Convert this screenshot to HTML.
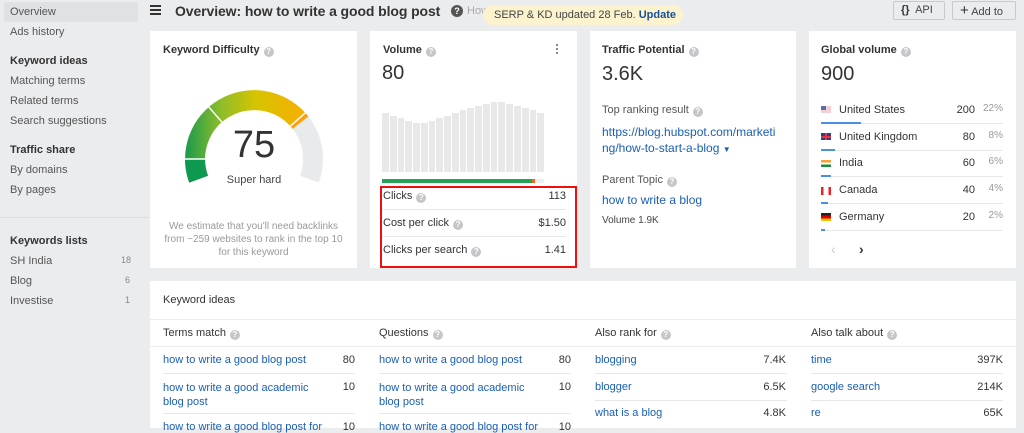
<!DOCTYPE html>
<html><head><meta charset="utf-8"><style>
*{margin:0;padding:0;box-sizing:border-box}
body{width:1024px;height:428px;overflow:hidden;background:#ebecee;font-family:"Liberation Sans",Arial,sans-serif;color:#333;position:relative;font-size:12px}
.a{position:absolute;white-space:nowrap}
.side{font-size:11px;color:#555}
.sh{font-weight:bold;color:#333;font-size:11px}
.card{position:absolute;background:#fff}
.q{display:inline-block;width:10px;height:10px;border-radius:50%;background:#c4c6c9;color:#fff;font-size:8px;line-height:10px;text-align:center;font-weight:bold;vertical-align:-1px;margin-left:4px}
.t{font-weight:bold;font-size:11px;color:#333}
.lnk{color:#1a5fb4}
.row{font-size:11px;color:#333}
.gl{position:absolute;height:1px;background:#e6e7e9}
</style></head><body>
<!-- sidebar -->
<div class="a" style="left:4px;top:2px;width:134px;height:20px;background:#dfe1e5;border-radius:2px"></div>
<div class="a side" style="left:10px;top:6px">Overview</div>
<div class="a side" style="left:10px;top:26px">Ads history</div>
<div class="a sh" style="left:10px;top:55px">Keyword ideas</div>
<div class="a side" style="left:10px;top:75px">Matching terms</div>
<div class="a side" style="left:10px;top:95px">Related terms</div>
<div class="a side" style="left:10px;top:115px">Search suggestions</div>
<div class="a sh" style="left:10px;top:144px">Traffic share</div>
<div class="a side" style="left:10px;top:164px">By domains</div>
<div class="a side" style="left:10px;top:184px">By pages</div>
<div class="a" style="left:0;top:217px;width:150px;height:1px;background:#dcdde0"></div>
<div class="a sh" style="left:10px;top:235px">Keywords lists</div>
<div class="a side" style="left:10px;top:255px">SH India</div><div class="a side" style="left:121px;top:255px;font-size:9px;color:#888">18</div>
<div class="a side" style="left:10px;top:275px">Blog</div><div class="a side" style="left:125px;top:275px;font-size:9px;color:#888">6</div>
<div class="a side" style="left:10px;top:295px">Investise</div><div class="a side" style="left:125px;top:295px;font-size:9px;color:#888">1</div>

<!-- header -->
<div class="a" style="left:150px;top:5px;width:11px;height:2px;background:#333;box-shadow:0 4px 0 #333,0 8px 0 #333"></div>
<div class="a" style="left:175px;top:3px;font-size:14px;font-weight:bold;color:#333;letter-spacing:-0.1px">Overview: how to write a good blog post</div>
<div class="a" style="left:451px;top:5px;width:12px;height:12px;border-radius:50%;background:#555;color:#fff;font-size:9px;font-weight:bold;text-align:center;line-height:12px">?</div>
<div class="a" style="left:467px;top:5px;font-size:11px;color:#aaa">How</div>
<div class="a" style="left:483px;top:5px;width:200px;height:20px;background:#fbf3cd;border-radius:10px;font-size:11px;color:#444;line-height:20px;padding-left:11px">SERP &amp; KD updated 28 Feb. <b style="color:#1a4f9c">Update</b></div>
<div class="a" style="left:893px;top:1px;width:52px;height:19px;border:1px solid #c8c9cc;border-radius:2px;font-size:11px;line-height:17px;color:#444;padding-left:7px"><b style="color:#333">{}</b>&nbsp; API</div>
<div class="a" style="left:952px;top:1px;width:64px;height:19px;border:1px solid #c8c9cc;border-radius:2px;font-size:11px;line-height:17px;color:#444;padding-left:7px"><span style="font-size:15px;color:#333">+</span> Add to</div>

<!-- KD card -->
<div class="card" style="left:150px;top:31px;width:207px;height:237px"></div>
<div class="a t" style="left:163px;top:44px">Keyword Difficulty<span class="q">?</span></div>
<svg class="a" style="left:0;top:0" width="400" height="270">
<defs><linearGradient id="g" gradientUnits="userSpaceOnUse" x1="185" y1="0" x2="305" y2="0">
<stop offset="0" stop-color="#199a4d"/><stop offset="0.3" stop-color="#8ebd2a"/><stop offset="0.6" stop-color="#d7c400"/><stop offset="1" stop-color="#f7ae00"/></linearGradient></defs>
<path d="M198.6 179.2 A59 59 0 0 1 297.8 119.5" stroke="url(#g)" stroke-width="20" fill="none"/>
<path d="M198.6 179.2 A59 59 0 0 1 195 159" stroke="#0d9950" stroke-width="20" fill="none"/>
<path d="M297.8 119.5 A59 59 0 0 1 300.5 122.7" stroke="#ff9e0a" stroke-width="20" fill="none"/>
<path d="M300.5 122.7 A59 59 0 0 1 309.4 179.2" stroke="#e9eaec" stroke-width="20" fill="none"/>
<g stroke="#fff" stroke-width="1.5">
<line x1="183" y1="159" x2="207" y2="159"/>
<line x1="208.7" y1="106.9" x2="221.9" y2="122"/>
<line x1="305.3" y1="112.8" x2="290.4" y2="126.2"/>
</g>
</svg>
<div class="a" style="left:224px;top:124px;width:60px;text-align:center;font-size:38px;color:#333">75</div>
<div class="a" style="left:214px;top:174px;width:80px;text-align:center;font-size:11px;color:#444">Super hard</div>
<div class="a" style="left:150px;top:220px;width:207px;text-align:center;font-size:10px;line-height:13px;color:#999;white-space:normal">We estimate that you'll need backlinks<br>from ~259 websites to rank in the top 10<br>for this keyword</div>

<!-- Volume card -->
<div class="card" style="left:370px;top:31px;width:207px;height:237px"></div>
<div class="a t" style="left:383px;top:44px">Volume<span class="q">?</span></div>
<div class="a" style="left:556px;top:44px;width:2px;height:2px;background:#888;box-shadow:0 4px 0 #888,0 8px 0 #888"></div>
<div class="a" style="left:382px;top:62px;font-size:20px;color:#333">80</div>
<div class="a" style="left:382px;top:100px;width:162px;height:72px;display:flex;align-items:flex-end;gap:1px">
<div style="flex:1;height:59px;background:#e8e8e8"></div><div style="flex:1;height:56px;background:#e8e8e8"></div><div style="flex:1;height:54px;background:#e8e8e8"></div><div style="flex:1;height:51px;background:#e8e8e8"></div><div style="flex:1;height:49px;background:#e8e8e8"></div><div style="flex:1;height:49px;background:#e8e8e8"></div><div style="flex:1;height:51px;background:#e8e8e8"></div><div style="flex:1;height:54px;background:#e8e8e8"></div><div style="flex:1;height:56px;background:#e8e8e8"></div><div style="flex:1;height:59px;background:#e8e8e8"></div><div style="flex:1;height:62px;background:#e8e8e8"></div><div style="flex:1;height:64px;background:#e8e8e8"></div><div style="flex:1;height:66px;background:#e8e8e8"></div><div style="flex:1;height:68px;background:#e8e8e8"></div><div style="flex:1;height:70px;background:#e8e8e8"></div><div style="flex:1;height:70px;background:#e8e8e8"></div><div style="flex:1;height:68px;background:#e8e8e8"></div><div style="flex:1;height:66px;background:#e8e8e8"></div><div style="flex:1;height:64px;background:#e8e8e8"></div><div style="flex:1;height:62px;background:#e8e8e8"></div><div style="flex:1;height:59px;background:#e8e8e8"></div>
</div>
<div class="a" style="left:382px;top:179px;width:162px;height:4px;background:#eee"></div>
<div class="a" style="left:382px;top:179px;width:150px;height:4px;background:#23a455"></div>
<div class="a" style="left:532px;top:179px;width:3px;height:4px;background:#f26a1b"></div>
<div class="a row" style="left:383px;top:190px">Clicks<span class="q">?</span></div><div class="a row" style="right:458px;top:190px">113</div>
<div class="gl" style="left:382px;top:209px;width:184px"></div>
<div class="a row" style="left:383px;top:217px">Cost per click<span class="q">?</span></div><div class="a row" style="right:458px;top:217px">$1.50</div>
<div class="gl" style="left:382px;top:236px;width:184px"></div>
<div class="a row" style="left:383px;top:244px">Clicks per search<span class="q">?</span></div><div class="a row" style="right:458px;top:244px">1.41</div>
<div class="a" style="left:380px;top:186px;width:197px;height:82px;border:2px solid #ee1010"></div>

<!-- Traffic potential -->
<div class="card" style="left:590px;top:31px;width:206px;height:237px"></div>
<div class="a t" style="left:602px;top:44px">Traffic Potential<span class="q">?</span></div>
<div class="a" style="left:602px;top:63px;font-size:20px;color:#333">3.6K</div>
<div class="a" style="left:602px;top:104px;font-size:11px;color:#555">Top ranking result<span class="q">?</span></div>
<div class="a lnk" style="left:602px;top:124px;font-size:12px;line-height:16px">https://blog.hubspot.com/marketi<br>ng/how-to-start-a-blog <span style="font-size:8px">▼</span></div>
<div class="a" style="left:602px;top:174px;font-size:11px;color:#555">Parent Topic<span class="q">?</span></div>
<div class="a lnk" style="left:602px;top:193px;font-size:12px">how to write a blog</div>
<div class="a" style="left:602px;top:215px;font-size:10px;color:#444">Volume 1.9K</div>

<!-- Global volume -->
<div class="card" style="left:809px;top:31px;width:207px;height:237px"></div>
<div class="a t" style="left:821px;top:44px">Global volume<span class="q">?</span></div>
<div class="a" style="left:821px;top:63px;font-size:20px;color:#333">900</div>
<div class="a" style="left:821px;top:106px;width:10px;height:7px;background:#f3d0d3"><div style="width:5px;height:4px;background:#5a6ea8"></div></div>
<div class="a row" style="left:839px;top:104px">United States</div><div class="a row" style="right:49px;top:104px">200</div><div class="a row" style="right:21px;top:103px;color:#999;font-size:10px">22%</div>
<div class="gl" style="left:821px;top:123px;width:182px"></div><div class="a" style="left:821px;top:122px;width:40px;height:2px;background:#4a90e2"></div>
<div class="a" style="left:821px;top:133px;width:10px;height:7px;background:#2b3f8c"><div style="position:absolute;left:4px;top:0;width:2px;height:7px;background:#e33"></div><div style="position:absolute;left:0;top:3px;width:10px;height:2px;background:#e33"></div></div>
<div class="a row" style="left:839px;top:131px">United Kingdom</div><div class="a row" style="right:49px;top:131px">80</div><div class="a row" style="right:21px;top:130px;color:#999;font-size:10px">8%</div>
<div class="gl" style="left:821px;top:150px;width:182px"></div><div class="a" style="left:821px;top:149px;width:14px;height:2px;background:#4a90e2"></div>
<div class="a" style="left:821px;top:160px;width:10px;height:7px;background:linear-gradient(#f7a13a 33%,#fff 33%,#fff 66%,#1e8a3a 66%)"></div>
<div class="a row" style="left:839px;top:157px">India</div><div class="a row" style="right:49px;top:157px">60</div><div class="a row" style="right:21px;top:156px;color:#999;font-size:10px">6%</div>
<div class="gl" style="left:821px;top:176px;width:182px"></div><div class="a" style="left:821px;top:175px;width:10px;height:2px;background:#4a90e2"></div>
<div class="a" style="left:821px;top:187px;width:10px;height:8px;background:linear-gradient(90deg,#e22 25%,#fff 25%,#fff 75%,#e22 75%)"></div>
<div class="a row" style="left:839px;top:184px">Canada</div><div class="a row" style="right:49px;top:184px">40</div><div class="a row" style="right:21px;top:183px;color:#999;font-size:10px">4%</div>
<div class="gl" style="left:821px;top:203px;width:182px"></div><div class="a" style="left:821px;top:202px;width:7px;height:2px;background:#4a90e2"></div>
<div class="a" style="left:821px;top:213px;width:10px;height:8px;background:linear-gradient(#222 33%,#d00 33%,#d00 66%,#f5c400 66%)"></div>
<div class="a row" style="left:839px;top:211px">Germany</div><div class="a row" style="right:49px;top:211px">20</div><div class="a row" style="right:21px;top:210px;color:#999;font-size:10px">2%</div>
<div class="gl" style="left:821px;top:230px;width:182px"></div><div class="a" style="left:821px;top:229px;width:4px;height:2px;background:#4a90e2"></div>
<div class="a" style="left:831px;top:241px;font-size:14px;color:#ccc">‹</div>
<div class="a" style="left:859px;top:241px;font-size:14px;color:#333;font-weight:bold">›</div>

<!-- Keyword ideas -->
<div class="card" style="left:150px;top:281px;width:866px;height:147px"></div>
<div class="a" style="left:163px;top:294px;font-size:11px;color:#333">Keyword ideas</div>
<div class="gl" style="left:150px;top:319px;width:866px;background:#ececee"></div>
<div class="a t" style="left:163px;top:327px;font-weight:normal;color:#333">Terms match<span class="q">?</span></div>
<div class="a t" style="left:379px;top:327px;font-weight:normal">Questions<span class="q">?</span></div>
<div class="a t" style="left:595px;top:327px;font-weight:normal">Also rank for<span class="q">?</span></div>
<div class="a t" style="left:811px;top:327px;font-weight:normal">Also talk about<span class="q">?</span></div>
<div class="gl" style="left:150px;top:346px;width:866px;background:#ececee"></div>

<div class="a lnk" style="left:163px;top:354px;font-size:11px">how to write a good blog post</div><div class="a row" style="right:669px;top:354px">80</div>
<div class="gl" style="left:163px;top:373px;width:192px"></div>
<div class="a lnk" style="left:163px;top:381px;font-size:11px;line-height:14px">how to write a good academic<br>blog post</div><div class="a row" style="right:669px;top:381px">10</div>
<div class="gl" style="left:163px;top:413px;width:192px"></div>
<div class="a lnk" style="left:163px;top:421px;font-size:11px">how to write a good blog post for</div><div class="a row" style="right:669px;top:421px">10</div>

<div class="a lnk" style="left:379px;top:354px;font-size:11px">how to write a good blog post</div><div class="a row" style="right:453px;top:354px">80</div>
<div class="gl" style="left:379px;top:373px;width:192px"></div>
<div class="a lnk" style="left:379px;top:381px;font-size:11px;line-height:14px">how to write a good academic<br>blog post</div><div class="a row" style="right:453px;top:381px">10</div>
<div class="gl" style="left:379px;top:413px;width:192px"></div>
<div class="a lnk" style="left:379px;top:421px;font-size:11px">how to write a good blog post for</div><div class="a row" style="right:453px;top:421px">10</div>

<div class="a lnk" style="left:595px;top:354px;font-size:11px">blogging</div><div class="a row" style="right:238px;top:354px">7.4K</div>
<div class="gl" style="left:595px;top:373px;width:192px"></div>
<div class="a lnk" style="left:595px;top:381px;font-size:11px">blogger</div><div class="a row" style="right:238px;top:381px">6.5K</div>
<div class="gl" style="left:595px;top:400px;width:192px"></div>
<div class="a lnk" style="left:595px;top:407px;font-size:11px">what is a blog</div><div class="a row" style="right:238px;top:407px">4.8K</div>

<div class="a lnk" style="left:811px;top:354px;font-size:11px">time</div><div class="a row" style="right:21px;top:354px">397K</div>
<div class="gl" style="left:811px;top:373px;width:192px"></div>
<div class="a lnk" style="left:811px;top:381px;font-size:11px">google search</div><div class="a row" style="right:21px;top:381px">214K</div>
<div class="gl" style="left:811px;top:400px;width:192px"></div>
<div class="a lnk" style="left:811px;top:407px;font-size:11px">re</div><div class="a row" style="right:21px;top:407px">65K</div>
</body></html>
